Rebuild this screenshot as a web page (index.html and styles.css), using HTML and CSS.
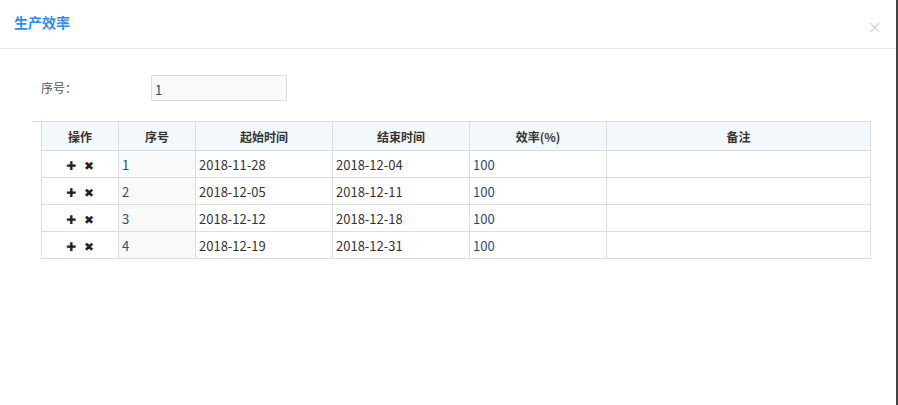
FILE: index.html
```html
<!DOCTYPE html>
<html>
<head>
    <meta charset="utf-8">
    <title>生产效率</title>
    <link rel="stylesheet" href="styles.css">
</head>
<body>
    <div class="dialog">
        <div class="dialog-head">
            <span class="dialog-title">生产效率</span>
            <span class="dialog-close">&times;</span>
        </div>
        <div class="dialog-body">
            <div class="form-row">
                <label class="form-label">序号：</label>
                <input class="form-input" type="text" value="1">
            </div>
            <div class="grid-wrap">
                <div class="grid-gutter"></div>
                <table class="grid">
                    <colgroup>
                        <col style="width:77px">
                        <col style="width:77px">
                        <col style="width:137px">
                        <col style="width:137px">
                        <col style="width:137px">
                        <col>
                    </colgroup>
                    <thead>
                        <tr>
                            <th>操作</th>
                            <th>序号</th>
                            <th>起始时间</th>
                            <th>结束时间</th>
                            <th>效率(%)</th>
                            <th>备注</th>
                        </tr>
                    </thead>
                    <tbody>
                        <tr>
                            <td class="ops"><span class="op">&#x271A;</span><span class="op">&#x2716;</span></td>
                            <td class="seq">1</td>
                            <td>2018-11-28</td>
                            <td>2018-12-04</td>
                            <td class="num">100</td>
                            <td></td>
                        </tr>
                        <tr>
                            <td class="ops"><span class="op">&#x271A;</span><span class="op">&#x2716;</span></td>
                            <td class="seq">2</td>
                            <td>2018-12-05</td>
                            <td>2018-12-11</td>
                            <td class="num">100</td>
                            <td></td>
                        </tr>
                        <tr>
                            <td class="ops"><span class="op">&#x271A;</span><span class="op">&#x2716;</span></td>
                            <td class="seq">3</td>
                            <td>2018-12-12</td>
                            <td>2018-12-18</td>
                            <td class="num">100</td>
                            <td></td>
                        </tr>
                        <tr>
                            <td class="ops"><span class="op">&#x271A;</span><span class="op">&#x2716;</span></td>
                            <td class="seq">4</td>
                            <td>2018-12-19</td>
                            <td>2018-12-31</td>
                            <td class="num">100</td>
                            <td></td>
                        </tr>
                    </tbody>
                </table>
            </div>
        </div>
    </div>
</body>
</html>
```
FILE: styles.css
```css
html, body{
    margin: 0;
    padding: 0;
    background: #fff;
}
body{
    font-family: "Noto Sans CJK SC", "Noto Sans", sans-serif;
    font-size: 12px;
    color: #333;
}
.dialog{
    box-sizing: border-box;
    width: 898px;
    height: 405px;
    border-right: 2px solid #444;
    background: #fff;
}
.dialog-head{
    height: 49px;
    border-bottom: 1px solid #e8e8e8;
    display: flex;
    align-items: center;
    justify-content: space-between;
    padding: 0 14px 0 14px;
    box-sizing: border-box;
}
.dialog-title{
    color: #2d8cf0;
    font-size: 14px;
    font-weight: bold;
    margin-top: -4px;
}
.dialog-close{
    color: #c8c8c8;
    font-family: "DejaVu Sans", sans-serif;
    font-size: 18px;
    font-weight: 300;
    margin-top: 4px;
}
.dialog-body{
    padding: 26px 0 0 33px;
}
.form-row{
    display: flex;
    align-items: center;
    height: 26px;
}
.form-label{
    width: 110px;
    padding-left: 8px;
    margin-top: -2px;
    color: #555;
}
.form-input{
    box-sizing: border-box;
    width: 136px;
    height: 26px;
    border: 1px solid #ddd;
    background: #f9f9f9;
    padding: 2px 3px 0;
    font-family: inherit;
    font-size: 13px;
    color: #2b4a7a;
    outline: none;
}
.grid-wrap{
    display: flex;
    margin-top: 20px;
}
.grid-gutter{
    width: 8px;
    border-top: 1px solid #ddd;
}
.grid{
    border-collapse: collapse;
    width: 830px;
    table-layout: fixed;
}
.grid th, .grid td{
    border: 1px solid #ddd;
    padding: 0 3px;
    white-space: nowrap;
}
.grid th{
    height: 28px;
    background: #f3f8fd;
    font-weight: bold;
    text-align: center;
    color: #333;
}
.grid td{
    height: 26px;
    text-align: left;
    font-size: 13px;
}
.grid td.ops{
    text-align: center;
}
.op{
    display: inline-block;
    margin: 0 4px;
    font-family: "DejaVu Sans", sans-serif;
    font-size: 12px;
    color: #222;
}
.grid td.seq{
    background: #f9f9f9;
    color: #2b4a7a;
}
.grid td.num{
    color: #2b4a7a;
}
```
